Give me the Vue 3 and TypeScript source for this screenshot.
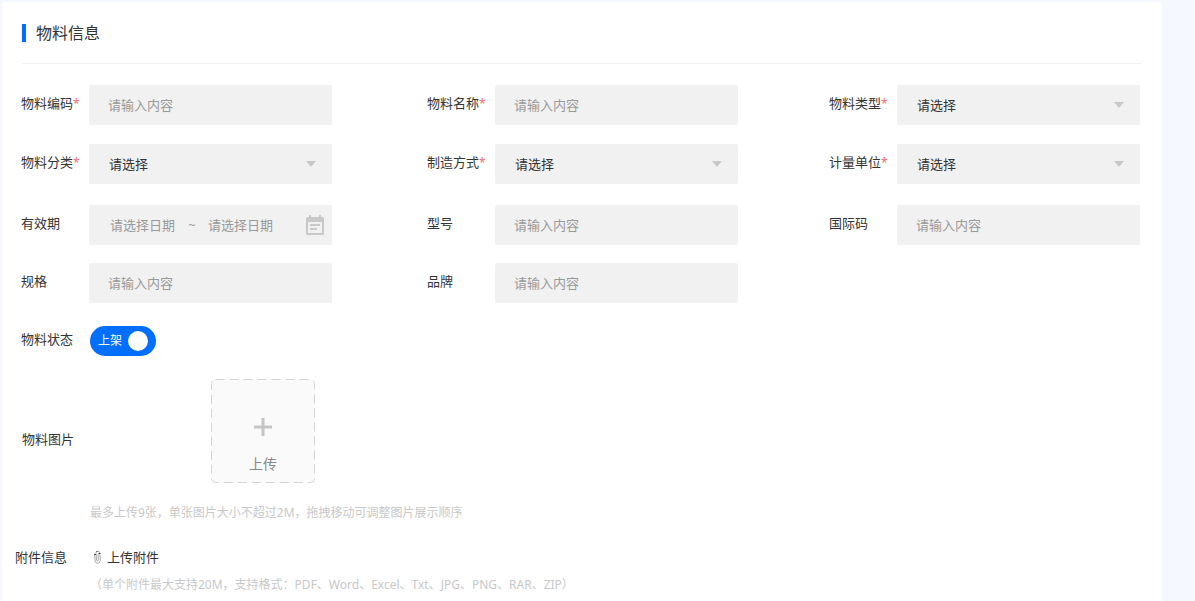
<script setup lang="ts">
import { reactive, ref } from 'vue'

type FieldKind = 'text' | 'select' | 'range'

interface Field {
  id: string
  label: string
  kind: FieldKind
  required?: boolean
}

const groups: Field[][] = [
  [
    { id: 'code', label: '物料编码', kind: 'text', required: true },
    { id: 'name', label: '物料名称', kind: 'text', required: true },
    { id: 'type', label: '物料类型', kind: 'select', required: true },
    { id: 'category', label: '物料分类', kind: 'select', required: true },
    { id: 'method', label: '制造方式', kind: 'select', required: true },
    { id: 'unit', label: '计量单位', kind: 'select', required: true },
  ],
  [
    { id: 'validity', label: '有效期', kind: 'range' },
    { id: 'model', label: '型号', kind: 'text' },
    { id: 'barcode', label: '国际码', kind: 'text' },
    { id: 'spec', label: '规格', kind: 'text' },
    { id: 'brand', label: '品牌', kind: 'text' },
  ],
]

const values = reactive<Record<string, string>>({
  type: '',
  category: '',
  method: '',
  unit: '',
})
const onShelf = ref(true)
</script>

<template>
  <main class="page">
    <form class="card" @submit.prevent>
      <header class="head">
        <h1 class="title">物料信息</h1>
      </header>

      <div v-for="(group, g) in groups" :key="g" class="grid">
        <div v-for="field in group" :key="field.id" class="field">
          <label class="label" :for="field.id">{{ field.label }}<span v-if="field.required" class="star">*</span></label>

          <input
            v-if="field.kind === 'text'"
            :id="field.id"
            v-model="values[field.id]"
            class="control"
            type="text"
            placeholder="请输入内容"
          />

          <div v-else-if="field.kind === 'select'" class="select">
            <select :id="field.id" v-model="values[field.id]" class="control">
              <option value="">请选择</option>
            </select>
            <svg class="caret" viewBox="0 0 10 6" aria-hidden="true"><path d="M0 0h10L5.600 5.200q-.6.600-1.200 0z" /></svg>
          </div>

          <div v-else class="control range">
            <input :id="field.id" v-model="values.from" class="date" type="text" placeholder="请选择日期" />
            <span class="tilde">~</span>
            <input v-model="values.to" class="date" type="text" placeholder="请选择日期" aria-label="结束日期" />
            <svg class="calendar" viewBox="0 0 18 20" aria-hidden="true">
              <path
                fill-rule="evenodd"
                d="M3 0h2v2h8V0h2v2h1.500A1.500 1.500 0 0 1 18 3.500v15a1.500 1.500 0 0 1-1.500 1.500h-15A1.500 1.500 0 0 1 0 18.500v-15A1.500 1.500 0 0 1 1.500 2H3zM2 7v11h14V7zM4 9h10v2H4zM4 13h7v2H4z"
              />
            </svg>
          </div>
        </div>
      </div>

      <div class="field status">
        <label class="label" for="status">物料状态</label>
        <span class="switch">
          <input id="status" v-model="onShelf" type="checkbox" role="switch" />
          <span class="switch-text">{{ onShelf ? '上架' : '下架' }}</span>
          <span class="knob"></span>
        </span>
      </div>

      <div class="field images">
        <label class="label" for="images">物料图片</label>
        <label class="upload">
          <input id="images" class="file" type="file" accept="image/*" multiple />
          <svg class="outline" viewBox="0 0 104 104" aria-hidden="true">
            <rect x="0.5" y="0.5" width="103" height="103" rx="4" />
          </svg>
          <svg class="plus" viewBox="0 0 18 18" aria-hidden="true"><path d="M9 0v18M0 9h18" /></svg>
          <span>上传</span>
        </label>
      </div>
      <p class="hint">最多上传9张，单张图片大小不超过2M，拖拽移动可调整图片展示顺序</p>

      <div class="attachments">
        <div class="field">
          <span class="label">附件信息</span>
          <button class="attach" type="button">
            <svg class="clip" viewBox="0 0 9 14" aria-hidden="true">
              <path d="M1.500 4.500L2.200 11q.4 2.300 2.500 2.300T7.300 10.500L6.800 3Q6.500 1 4.700 1T3 3l.6 7q.2 1 1 1t.8-1.200L5 4" />
              <path class="clip-dark" d="M1 4.500h2M5.500 3.500h2M3.500 1.500h1" />
            </svg>
            上传附件
          </button>
        </div>
      </div>
      <p class="hint">（单个附件最大支持20M，支持格式：PDF、Word、Excel、Txt、JPG、PNG、RAR、ZIP）</p>
    </form>
  </main>
</template>

<style>
body {
  background: #f5f8ff;
}
</style>

<style scoped>
.page {
  padding: 2px 33px 0 2px;
  font-family: 'Noto Sans', 'Noto Sans CJK SC', sans-serif;
  font-size: 13px;
  line-height: 20px;
  color: #333;
}
.page * {
  box-sizing: border-box;
}
input,
select,
button {
  font: inherit;
  color: inherit;
}
.card {
  min-height: calc(100vh - 2px);
  padding: 0 20px;
  border-radius: 4px 4px 0 0;
  background: #fff;
}
.head {
  display: flex;
  align-items: center;
  height: 62px;
  margin-bottom: 21px;
  border-bottom: 1px solid #f0f0f0;
}
.title {
  margin: 0;
  padding-left: 10px;
  border-left: 4px solid #006eff;
  font-size: 16px;
  font-weight: 400;
  line-height: 18px;
}
.grid {
  display: grid;
  grid-template-columns: 406fr 402fr 313fr;
  row-gap: 19px;
  margin: 0 0 21px -1px;
}
.grid + .grid {
  row-gap: 18px;
}
.field {
  display: flex;
  align-items: center;
}
.label {
  flex: none;
  width: 68px;
  padding-bottom: 4px;
}
.star {
  color: #f56c6c;
  font-size: 12px;
}
.control {
  width: 243px;
  height: 40px;
  padding: 0 19px;
  border: 0;
  border-radius: 2px;
  outline: 0;
  background: #f1f1f1;
}
input::placeholder {
  color: #999;
  opacity: 1;
}
.select {
  position: relative;
}
.select .control {
  display: block;
  appearance: none;
  padding: 0 20px;
}
.caret {
  position: absolute;
  top: 17px;
  right: 16px;
  width: 10px;
  height: 6px;
  fill: #c8c8c8;
  pointer-events: none;
}
.range {
  display: flex;
  align-items: center;
  padding: 0 8px 0 21px;
}
.date {
  width: 66px;
  padding: 0;
  border: 0;
  outline: 0;
  background: none;
}
.tilde {
  width: 32px;
  color: #999;
  text-align: center;
}
.calendar {
  width: 18px;
  height: 20px;
  margin-left: auto;
  fill: #c8c8c8;
}
.status {
  margin: 23px 0 23px -1px;
}
.switch {
  position: relative;
  display: flex;
  align-items: center;
  justify-content: space-between;
  width: 66px;
  height: 30px;
  margin-left: 1px;
  padding: 0 8px;
  border-radius: 15px;
  background: #006eff;
  color: #fff;
  font-size: 12px;
}
.switch input {
  position: absolute;
  inset: 0;
  width: 100%;
  height: 100%;
  margin: 0;
  opacity: 0;
  cursor: pointer;
}
.knob {
  width: 20px;
  height: 20px;
  border-radius: 50%;
  background: #fff;
}
.images .label {
  padding: 16px 0 0;
}
.upload {
  position: relative;
  display: flex;
  flex-direction: column;
  align-items: center;
  justify-content: flex-end;
  gap: 18px;
  width: 104px;
  height: 104px;
  margin-left: 121px;
  padding-bottom: 9px;
  border-radius: 4px;
  background: #fafafa;
  color: #888;
  font-size: 14px;
  cursor: pointer;
}
.file {
  position: absolute;
  inset: 0;
  width: 100%;
  opacity: 0;
}
.outline {
  position: absolute;
  inset: 0;
  fill: none;
  stroke: #d4d4d4;
  stroke-dasharray: 9 5;
}
.plus {
  width: 18px;
  height: 18px;
  fill: none;
  stroke: #c4c4c4;
  stroke-width: 3;
}
.hint {
  margin: 0 0 0 68px;
  color: #c8c8c8;
  font-size: 12px;
}
.images + .hint {
  margin-top: 20px;
}
.attachments {
  margin: 24px 0 8px -7px;
}
.attachments .label {
  width: 78px;
  padding: 0;
}
.attach {
  display: flex;
  align-items: center;
  gap: 5px;
  padding: 0;
  border: 0;
  background: none;
  cursor: pointer;
}
.clip {
  width: 9px;
  height: 14px;
  fill: none;
  stroke: #aaa;
}
.clip-dark {
  stroke: #444;
}
</style>
